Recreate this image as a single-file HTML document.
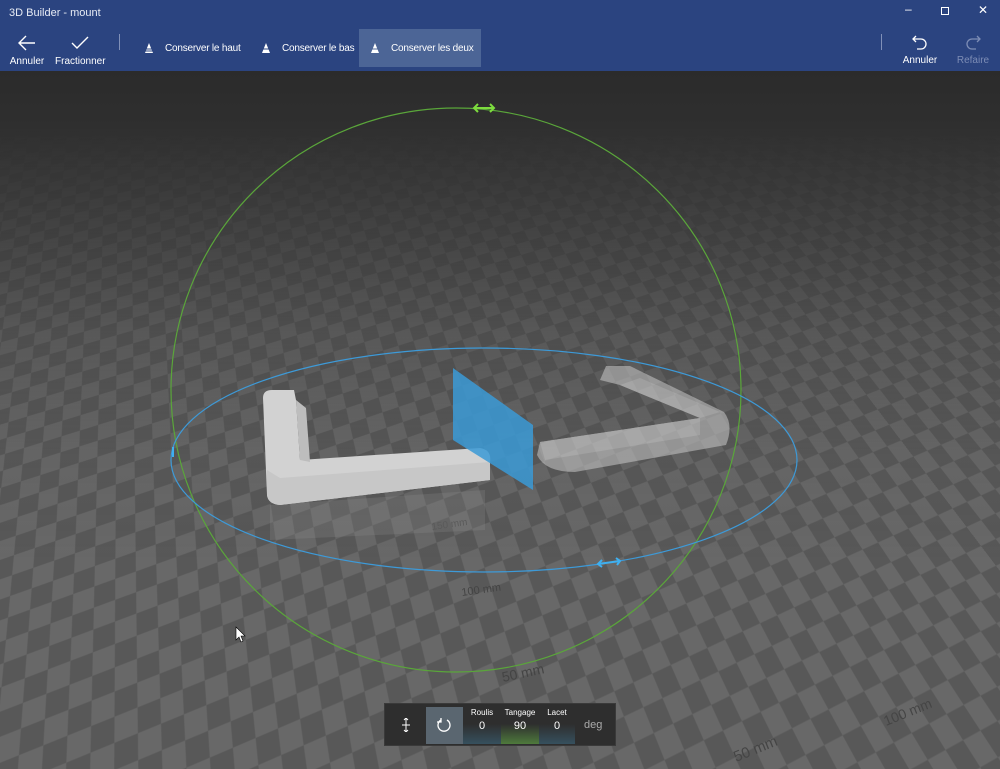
<!DOCTYPE html>
<html><head><meta charset="utf-8"><style>
*{margin:0;padding:0;box-sizing:border-box}
html,body{width:1000px;height:769px;overflow:hidden}
body{background:#2b2b2b;font-family:"Segoe UI","Liberation Sans",sans-serif;position:relative}
#hdr{position:absolute;left:0;top:0;width:1000px;height:71px;background:#2b4480;color:#fff;z-index:5}
.t{position:absolute;left:9px;top:7px;font-size:11px;color:#e8ecf5}
.btn{position:absolute;font-size:10px;text-align:center;color:#fff;white-space:nowrap}
.cb{position:absolute;top:29px;height:38px;font-size:10px;color:#fff;display:flex;align-items:center;padding-left:10px;white-space:nowrap;letter-spacing:-.2px}
.cb svg{margin-right:10px;flex:none}
#scene{position:absolute;left:0;top:71px;width:1000px;height:698px;overflow:hidden;perspective:900px;perspective-origin:50% -20%}
#plane{position:absolute;left:-1500px;top:-900px;width:4000px;height:3000px;
background:repeating-conic-gradient(#686868 0 25%,#585858 0 50%) 0 0/42px 42px;
transform:rotateX(60deg) rotateZ(-20deg);transform-origin:50% 50%}
#fog{position:absolute;left:0;top:0;width:1000px;height:698px;background:linear-gradient(#2b2b2b 0%,#2f2f2f 8%,rgba(50,50,50,.75) 20%,rgba(60,60,60,.35) 38%,rgba(60,60,60,.08) 55%,rgba(60,60,60,0) 70%)}
#ov{position:absolute;left:0;top:0}
#panel{position:absolute;left:384px;top:703px;width:232px;height:43px;background:#2e2e2e;border:1px solid #3a3a3a;color:#fff}
</style></head><body>
<div id="scene"><div id="plane"></div><div id="fog"></div></div>
<div id="hdr">
<div class="t">3D Builder - mount</div>
<div style="position:absolute;right:0;top:0;width:140px;height:24px;color:#fff;font-size:12px">
<span style="position:absolute;left:45px;top:2px">–</span>
<span style="position:absolute;left:81px;top:7px;width:8px;height:8px;border:1px solid #fff"></span>
<span style="position:absolute;left:118px;top:3px">✕</span></div>
<div class="btn" style="left:9px;top:34px;width:36px"><svg width="20" height="18" viewBox="0 0 20 18"><path d="M18 9H2M9 2L2 9l7 7" stroke="#fff" stroke-width="1.4" fill="none"/></svg><div style="margin-top:1px">Annuler</div></div>
<div class="btn" style="left:55px;top:34px;width:50px"><svg width="20" height="18" viewBox="0 0 20 18"><path d="M2 9l5 5L18 3" stroke="#fff" stroke-width="1.4" fill="none"/></svg><div style="margin-top:1px">Fractionner</div></div>
<div style="position:absolute;left:119px;top:34px;width:1px;height:16px;background:#8090b8"></div>
<div class="cb" style="left:133px;width:112px"><svg width="12" height="12"><path d="M6 1L2 11h8z" fill="#fff"/><path d="M3 7h6M2.5 9h7" stroke="#2b4480"/></svg>Conserver le haut</div>
<div class="cb" style="left:250px;width:108px"><svg width="12" height="12"><path d="M6 1L2 11h8z" fill="#fff"/><path d="M3 7h6" stroke="#2b4480"/></svg>Conserver le bas</div>
<div class="cb" style="left:359px;width:122px;background:#4c6596"><svg width="12" height="12"><path d="M6 1L2 11h8z" fill="#fff"/><path d="M3.5 7h5" stroke="#4c6596"/></svg>Conserver les deux</div>
<div style="position:absolute;left:881px;top:34px;width:1px;height:16px;background:#8090b8"></div>
<div class="btn" style="left:900px;top:34px;width:40px"><svg width="18" height="18" viewBox="0 0 18 18"><path d="M5 2L2 5l3 3M2 5h8a5 5 0 0 1 0 10H6" stroke="#fff" stroke-width="1.3" fill="none"/></svg><div>Annuler</div></div>
<div class="btn" style="left:953px;top:34px;width:40px;color:#7d8db5"><svg width="18" height="18" viewBox="0 0 18 18"><path d="M13 2l3 3-3 3M16 5H8a5 5 0 0 0 0 10h4" stroke="#7d8db5" stroke-width="1.3" fill="none"/></svg><div>Refaire</div></div>
</div>
<svg id="ov" width="1000" height="769">
<text x="432" y="530" fill="#4a4a4a" font-size="10" font-family="Liberation Sans" transform="rotate(-8 432 530)">150 mm</text>
<text x="462" y="596" fill="#444" font-size="11" font-family="Liberation Sans" transform="rotate(-8 462 596)">100 mm</text>
<text x="503" y="682" fill="#444" font-size="14" font-family="Liberation Sans" transform="rotate(-12 503 682)">50 mm</text>
<text x="886" y="726" fill="#454545" font-size="14" font-family="Liberation Sans" transform="rotate(-22 886 726)">100 mm</text>
<text x="736" y="762" fill="#454545" font-size="15" font-family="Liberation Sans" transform="rotate(-22 736 762)">50 mm</text>
<ellipse cx="456" cy="390" rx="285" ry="282" fill="none" stroke="#5aa63a" stroke-width="1.2"/>
<path d="M270 505 L485 490 L485 530 L270 540Z" fill="#9a9a9a" opacity=".2"/>
<path d="M263 398 Q263 390 272 390 L294 390 L296 400 L300 460 L480 448 Q492 450 490 462 L490 480 L280 505 Q268 504 267 495Z" fill="#d2d2d2"/>
<path d="M296 400 L300 460 L310 462 L306 408Z" fill="#bdbdbd"/>
<path d="M267 470 L280 478 L490 462 L490 480 L280 505 Q268 504 267 495Z" fill="#c7c7c7"/>
<g opacity=".55">
<path d="M600 380 L606 366 L630 366 L724 412 Q734 425 726 445 L575 472 Q545 472 537 455 L540 442 L700 418 L620 385 Z" fill="#c8c8c8"/>
<path d="M540 442 L700 418 L700 435 L545 460Z" fill="#e0e0e0"/>
<path d="M620 385 L700 418 L720 412 L640 378Z" fill="#e0e0e0"/>
</g>
<path d="M453 368 L533 425 L533 490 L453 440Z" fill="#3b9ad6" opacity=".85"/>
<ellipse cx="484" cy="460" rx="313" ry="112" fill="none" stroke="#3d9ad8" stroke-width="1.2"/>
<path d="M474 108h20M478 104l-4 4 4 4M490 104l4 4-4 4" stroke="#7ddc3e" stroke-width="2" fill="none"/>
<path d="M598 564l22-3M602 560l-4 4 4 3M616 558l4 3-3 4" stroke="#3fb0f0" stroke-width="2" fill="none"/>
<path d="M173 447v10" stroke="#3fb0f0" stroke-width="2"/>
<path d="M236 627v13l3-3 2 5 2-1-2-5h4z" fill="#fff" stroke="#000" stroke-width=".6"/>
</svg>
<div id="panel">
<svg style="position:absolute;left:16px;top:14px" width="10" height="14"><path d="M5 0v14M1 7h8M3 2l2-2 2 2M3 12l2 2 2-2" stroke="#fff" fill="none"/></svg>
<div style="position:absolute;left:41px;top:3px;width:37px;height:37px;background:#5a6670"></div>
<svg style="position:absolute;left:50px;top:13px" width="18" height="18"><path d="M6 3A6 6 0 1 0 12 3M6 1v4H2" stroke="#fff" stroke-width="1.3" fill="none"/></svg>
<div style="position:absolute;left:78px;top:20px;width:38px;height:20px;background:linear-gradient(#2e2e2e,#36505e)"></div>
<div style="position:absolute;left:116px;top:20px;width:38px;height:20px;background:linear-gradient(#2e2e2e,#4e7a3c)"></div>
<div style="position:absolute;left:154px;top:20px;width:36px;height:20px;background:linear-gradient(#2e2e2e,#36505e)"></div>
<div style="position:absolute;left:78px;top:4px;width:38px;text-align:center;font-size:8px">Roulis</div>
<div style="position:absolute;left:116px;top:4px;width:38px;text-align:center;font-size:8px">Tangage</div>
<div style="position:absolute;left:154px;top:4px;width:36px;text-align:center;font-size:8px">Lacet</div>
<div style="position:absolute;left:78px;top:16px;width:38px;text-align:center;font-size:11px">0</div>
<div style="position:absolute;left:116px;top:16px;width:38px;text-align:center;font-size:11px">90</div>
<div style="position:absolute;left:154px;top:16px;width:36px;text-align:center;font-size:11px">0</div>
<div style="position:absolute;left:199px;top:15px;font-size:11px;color:#aaa">deg</div>
</div>
</body></html>
